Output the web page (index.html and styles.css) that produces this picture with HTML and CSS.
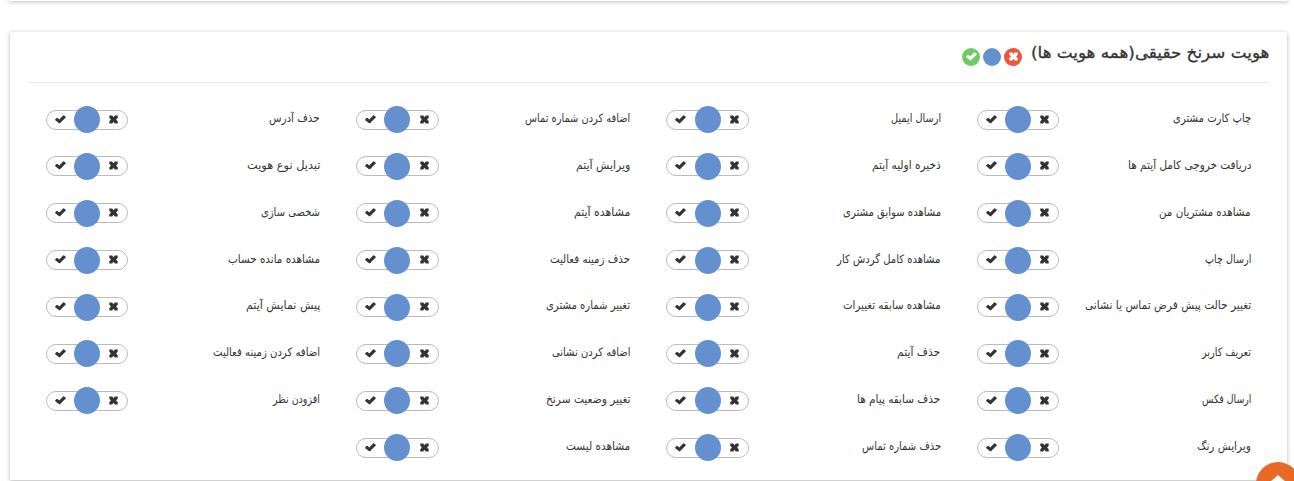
FILE: index.html
```html
<!DOCTYPE html>
<html lang="fa" dir="rtl">
<head>
<meta charset="utf-8">
<title>هویت سرنخ حقیقی</title>
<link rel="stylesheet" href="styles.css">
</head>
<body>
<svg class="sprite" aria-hidden="true">
  <symbol id="check" viewBox="0 0 11 9"><path d="M0.3 4.3 L1.6 3.1 Q2.1 2.7 2.6 3.1 L4.3 4.6 L8.1 0.5 Q8.6 0 9.1 0.4 L10.7 1.7 Q11.1 2.1 10.7 2.5 L5.2 8.1 Q4.5 8.7 3.8 8.1 L0.3 5.2 Q-0.1 4.7 0.3 4.3Z"/></symbol>
  <symbol id="cross" viewBox="0 0 9 9"><path d="M0.3 0.5H3.2L4.5 2.3 5.8 0.5H8.7V2.8L7.1 4.5 8.7 6.2V8.5H5.8L4.5 6.7 3.2 8.5H0.3V6.2L1.9 4.5 0.3 2.8Z"/></symbol>
</svg>
<main class="page">
  <section class="card card-previous"></section>
  <section class="card">
    <header class="card-header">
      <h2 class="title"><span class="fit" data-width="238">هویت سرنخ حقیقی(همه هویت ها)</span></h2>
      <div class="bulk">
        <button class="dot dot-deny" aria-label="هیچکدام"><svg class="cross"><use href="#cross"/></svg></button>
        <button class="dot dot-neutral" aria-label="پیش فرض"></button>
        <button class="dot dot-allow" aria-label="همه"><svg class="check"><use href="#check"/></svg></button>
      </div>
    </header>
    <div class="grid" id="permissions"></div>
  </section>
  <a class="to-top" href="#" aria-label="بالا"><svg class="arrow" viewBox="0 0 16 7"><path d="M8 0 16 7H0Z"/></svg></a>
</main>
<script src="app.js"></script>
</body>
</html>
```

FILE: styles.css
```css
* { box-sizing: border-box; }
body {
  margin: 0;
  background: #fff;
  color: #333;
  font-family: "DejaVu Sans", sans-serif;
}
.sprite { position: absolute; width: 0; height: 0; }
.page {
  position: relative;
  height: 481px;
  padding: 0 7px 0 10px;
  overflow: hidden;
}
.card {
  height: 448px;
  padding: 0 18px;
  background: #fff;
  box-shadow: 0 1px 4px rgba(0, 0, 0, .3);
}
.card-previous {
  height: 1px;
  margin-bottom: 31px;
  box-shadow: 0 0 4px 1px rgba(0, 0, 0, .3);
}
.card-header {
  display: flex;
  height: 51px;
  border-bottom: 1px solid #eaeaea;
}
.title {
  width: 237px;
  margin: 0;
  font-size: 16px;
  font-weight: 400;
  line-height: 42px;
  white-space: nowrap;
  -webkit-text-stroke: .3px #333;
}
.fit { display: inline-block; transform-origin: right center; }
.bulk { display: flex; gap: 3px; margin: 16px 10px 0 0; }
.dot {
  display: flex;
  align-items: center;
  justify-content: center;
  width: 18px;
  height: 18px;
  padding: 0 0 1px;
  border: 0;
  border-radius: 50%;
}
.dot-deny { background: #e9573f; fill: #fff; }
.dot-neutral { background: #6490cf; }
.dot-allow { background: #70ca63; fill: #fff; }
.check { width: 11px; height: 9px; }
.cross { width: 9px; height: 9px; }
.grid {
  display: grid;
  grid-template-columns: repeat(4, 310.3px);
  grid-auto-rows: 46.86px;
  padding-top: 22px;
}
.item {
  display: flex;
  justify-content: space-between;
  padding: 0 18px;
}
.label {
  font-size: 11.5px;
  line-height: 26px;
  white-space: nowrap;
}
.toggle {
  display: flex;
  align-items: center;
  justify-content: space-between;
  width: 82.5px;
  height: 20px;
  margin-top: 4.6px;
  padding: 0 9px 0 8px;
  border: 1px solid #bbb;
  border-radius: 10px;
  fill: #333;
}
.toggle .check,
.toggle .cross { margin-bottom: 1px; }
.knob {
  width: 26px;
  height: 27px;
  margin-right: 1px;
  border-radius: 50%;
  background: #6490cf;
}
.to-top {
  position: absolute;
  left: 1256px;
  top: 462px;
  width: 44px;
  height: 44px;
  border-radius: 50%;
  background: #e66a25;
}
.arrow {
  display: block;
  width: 16px;
  height: 7px;
  margin: 13px auto 0;
  fill: #fff;
}
```

FILE: app.js
```js
const permissions = [
  ["چاپ کارت مشتری", 78], ["ارسال ایمیل", 50], ["اضافه کردن شماره تماس", 105], ["حذف آدرس", 51],
  ["دریافت خروجی کامل آیتم ها", 123], ["ذخیره اولیه آیتم", 69], ["ویرایش آیتم", 54], ["تبدیل نوع هویت", 73],
  ["مشاهده مشتریان من", 92], ["مشاهده سوابق مشتری", 98], ["مشاهده آیتم", 56], ["شخصی سازی", 59],
  ["ارسال چاپ", 46], ["مشاهده کامل گردش کار", 103], ["حذف زمینه فعالیت", 80], ["مشاهده مانده حساب", 92],
  ["تغییر حالت پیش فرض تماس یا نشانی", 166], ["مشاهده سابقه تغییرات", 98], ["تغییر شماره مشتری", 84], ["پیش نمایش آیتم", 74],
  ["تعریف کاربر", 49], ["حذف آیتم", 43], ["اضافه کردن نشانی", 79], ["اضافه کردن زمینه فعالیت", 107],
  ["ارسال فکس", 49], ["حذف سابقه پیام ها", 83], ["تغییر وضعیت سرنخ", 85], ["افزودن نظر", 47],
  ["ویرایش رنگ", 54], ["حذف شماره تماس", 79], ["مشاهده لیست", 64]
];

document.getElementById("permissions").innerHTML = permissions.map(([name, width]) => `
  <div class="item">
    <div class="label"><span class="fit" data-width="${width}">${name}</span></div>
    <div class="toggle">
      <svg class="cross"><use href="#cross"/></svg>
      <span class="knob"></span>
      <svg class="check"><use href="#check"/></svg>
    </div>
  </div>`).join("");

document.querySelectorAll(".fit").forEach((el) => {
  el.style.transform = `scaleX(${el.dataset.width / el.offsetWidth})`;
});
```
